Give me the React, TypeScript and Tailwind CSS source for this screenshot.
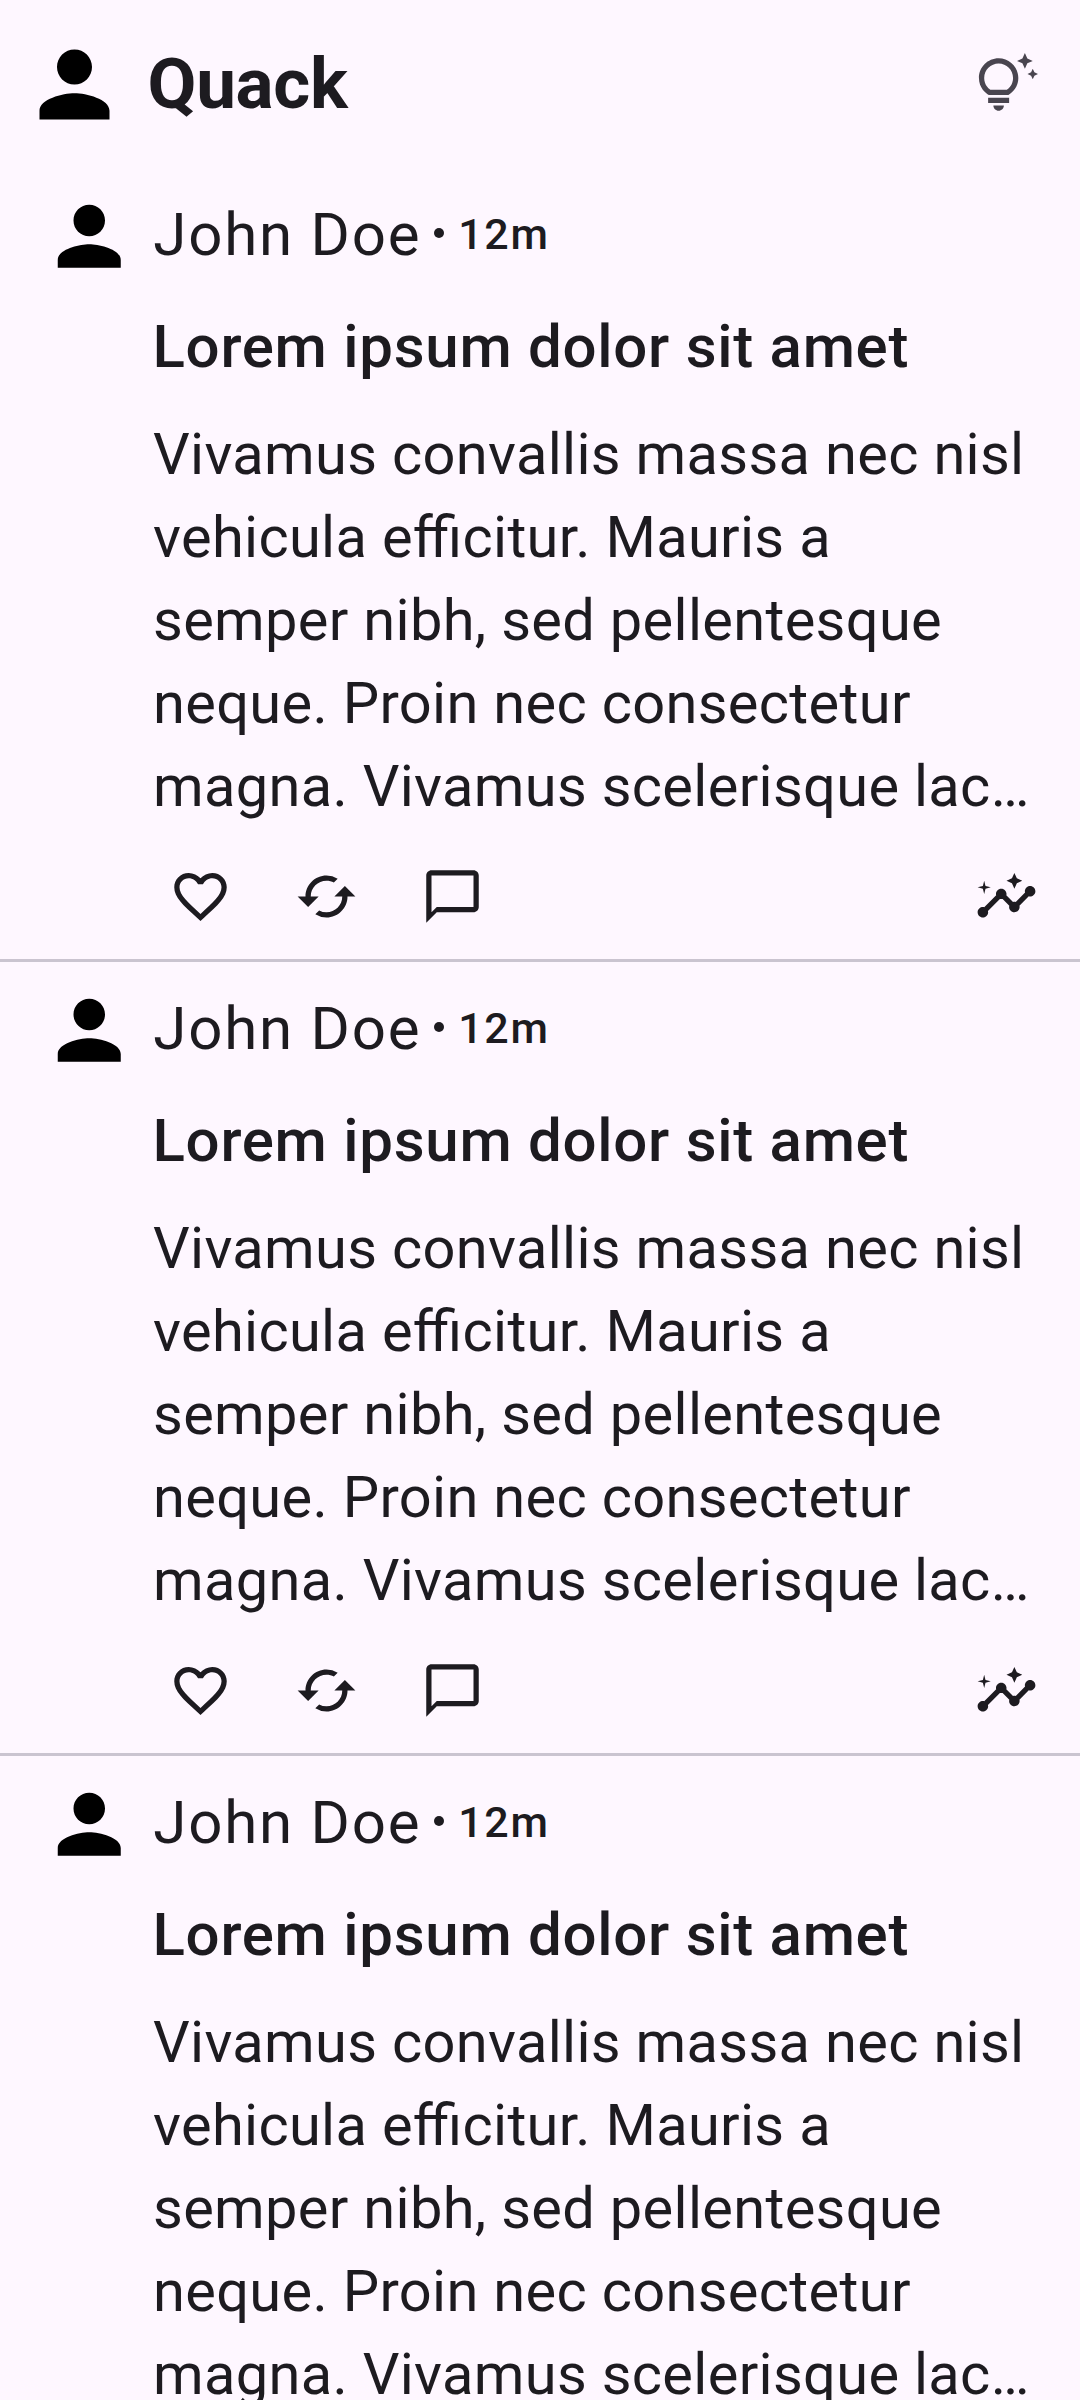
import React from "react";
import {
  MdCached,
  MdChatBubbleOutline,
  MdFavoriteBorder,
  MdInsights,
  MdOutlineTipsAndUpdates,
  MdPerson,
} from "react-icons/md";

const BODY_LINES = [
  "Vivamus convallis massa nec nisl",
  "vehicula efficitur. Mauris a",
  "semper nibh, sed pellentesque",
  "neque. Proin nec consectetur",
  "magna. Vivamus scelerisque lac…",
];

const POST_IDS = [1, 2, 3];

function Header() {
  return (
    <header className="flex h-[168px] shrink-0 items-start pl-[22px] pr-[42px]">
      <MdPerson className="mt-[31.5px] size-[105px] shrink-0 text-black" />
      <h1 className="ml-[20.5px] mt-[34px] text-[71px] font-bold leading-[100px] tracking-[-0.3px]">
        Quack
      </h1>
      <MdOutlineTipsAndUpdates className="ml-auto mt-[52.5px] size-[63px] text-[#49454f]" />
    </header>
  );
}

function Post() {
  return (
    <article className="flex h-[794px] shrink-0 flex-col border-b-[3px] border-[#cac4d0] pt-[21px]">
      <div className="flex h-[91px] items-center pl-[42px]">
        <MdPerson className="mt-[3px] size-[94.5px] shrink-0 text-black" />
        <span className="ml-[16.75px] text-[60px] leading-[84px] tracking-[1.78px]">John Doe</span>
        <span className="mb-[3px] ml-[13px] mr-[14px] size-[10px] shrink-0 rounded-full bg-current" />
        <span className="mb-[2px] text-[43px] font-medium leading-[60px] tracking-[1.6px]">12m</span>
      </div>
      <h2 className="mt-[25px] pl-[152.5px] text-[60px] font-medium leading-[84px] tracking-[0.72px]">
        Lorem ipsum dolor sit amet
      </h2>
      <div className="mt-[24px] whitespace-nowrap pl-[153px] text-[57.75px] leading-[83px] tracking-[0.33px] [font-feature-settings:'liga'_1]">
        {BODY_LINES.map((line) => (
          <p key={line}>{line}</p>
        ))}
      </div>
      <div className="mt-[36.5px] flex items-center gap-[63px] pl-[169px] pr-[42px]">
        <MdFavoriteBorder className="size-[63px]" />
        <MdCached className="size-[63px]" />
        <MdChatBubbleOutline className="size-[63px]" />
        <MdInsights className="ml-auto size-[63px]" />
      </div>
    </article>
  );
}

export default function App() {
  return (
    <main className="flex h-[2400px] w-[1080px] flex-col overflow-hidden bg-[#fef7ff] font-['Roboto',sans-serif] text-[#1d1b20]">
      <Header />
      {POST_IDS.map((id) => (
        <Post key={id} />
      ))}
    </main>
  );
}
